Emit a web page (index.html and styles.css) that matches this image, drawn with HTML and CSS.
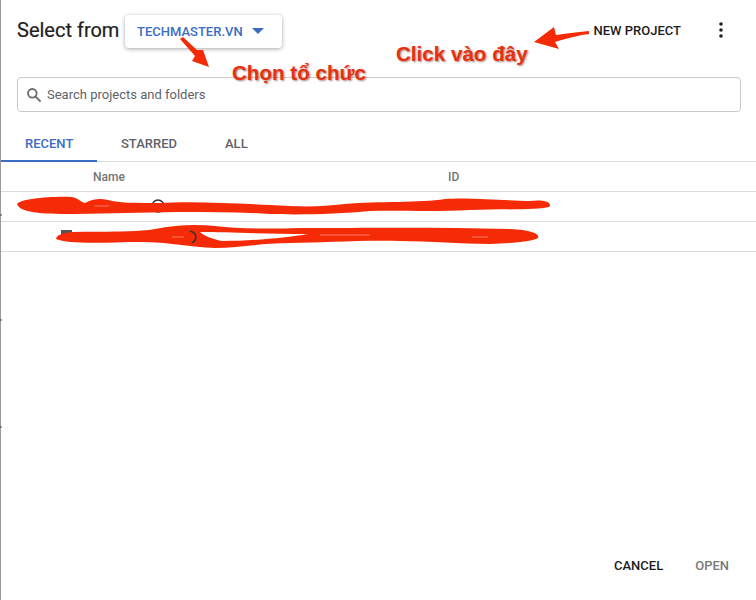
FILE: index.html
```html
<!DOCTYPE html>
<html lang="vi">

<head>
	<meta charset="UTF-8" />
	<title>Select from</title>
	<link rel="stylesheet" href="styles.css">
</head>

<body>
	<div class="dialog">
		<div class="top_bar">
			<span class="title">Select from</span>
			<button class="org_button">TECHMASTER.VN<span class="caret"></span></button>
			<button class="new_project">NEW PROJECT</button>
			<svg class="more_icon" width="4" height="16" viewBox="0 0 4 16">
				<circle cx="2" cy="2" r="1.8" />
				<circle cx="2" cy="8" r="1.8" />
				<circle cx="2" cy="14" r="1.8" />
			</svg>
		</div>

		<div class="search_box">
			<svg class="search_icon" width="16" height="16" viewBox="0 0 16 16">
				<circle cx="6.3" cy="6.3" r="4.3" />
				<path d="M9.6 9.6 L14.6 14.6" />
			</svg>
			<span>Search projects and folders</span>
		</div>

		<div class="tabs">
			<div class="tab active">RECENT</div>
			<div class="tab starred">STARRED</div>
			<div class="tab all">ALL</div>
		</div>

		<div class="row head_row">
			<span class="col_name">Name</span>
			<span class="col_id">ID</span>
		</div>
		<div class="row"></div>
		<div class="row"></div>

		<div class="actions">
			<button class="cancel">CANCEL</button>
			<button class="open">OPEN</button>
		</div>

		<!-- hand drawn notes on top of the screenshot -->
		<svg class="scribble" width="756" height="600" viewBox="0 0 756 600">
			<path class="edge_mark" d="M0 215 h2 M0 320 h2 M0 427 h2" />
			<circle class="ink" cx="158" cy="206" r="6" />
			<path class="ink_box" d="M61 230 h11 v8 h-11 z" />
			<path class="red" d="M17 204 C20 199 50 196 72 197 C80 199 82 203 85 203 C92 199 100 198 108 200 C118 203 135 203 160 203 C190 201 230 203 270 205 C300 207 320 207 345 204 C380 201 420 203 445 199 C470 197 510 201 530 201 C545 199 553 203 549 207 C540 210 500 209 470 210 C430 212 400 210 370 211 C340 214 300 215 270 214 C240 212 210 212 180 212 C140 213 110 213 75 214 C50 214 20 214 17 204 Z" />
			<path class="red" fill-rule="evenodd" d="M56 239 C57 235 62 233 72 232 C100 231 130 233 155 229 C175 225 195 224 215 226 C240 229 270 229 300 228 C360 228 440 227 510 229 C532 230 540 234 538 238 C532 242 510 243 490 244 C460 244 430 241 400 241 C360 240 320 243 290 243 C260 243 240 248 215 248 C190 247 170 242 140 242 C110 242 70 245 56 239 Z M200 232 C225 232 265 234 308 234 C285 238 250 241 222 241 C212 239 204 236 200 232 Z" />
			<path class="ink" d="M190 231 C197 233 198 239 192 243" />
			<path class="flecks" d="M95 206 h14 M172 237 h12 M320 235 h50 M472 237 h16" />
			<path class="red" d="M180 39 L183 37 L197 50 L203 50 L209 67 L192 61 L195 56 Z" />
			<path class="red" d="M589 31 C576 32 565 34 556 35 L554 27 L534 42 L559 49 L555 42 C568 38 580 35 589 34 Z" />
		</svg>
		<div class="note note_org">Chọn tổ chức</div>
		<div class="note note_new">Click vào đây</div>
	</div>
</body>

</html>
```

FILE: styles.css
```css
html,
body {
	margin: 0;
	padding: 0;
}

body {
	width: 756px;
	height: 600px;
	overflow: hidden;
	background: #ffffff;
	font-family: Roboto, "Liberation Sans", sans-serif;
}

button {
	border: none;
	background: none;
	padding: 0;
	font-family: inherit;
}

.dialog {
	position: relative;
	box-sizing: border-box;
	width: 756px;
	height: 600px;
	border-left: 1px solid #9a9a9a;
}

.top_bar {
	display: flex;
	align-items: center;
	height: 32px;
	padding: 14px 33px 0 16px;
}

.title {
	width: 103px;
	font-size: 20px;
	color: #212121;
	-webkit-text-stroke: 0.2px #212121;
}

.org_button {
	display: flex;
	align-items: center;
	box-sizing: border-box;
	width: 157px;
	height: 33px;
	margin: 2px 0 0 5px;
	padding-left: 12px;
	border-radius: 4px;
	background: #ffffff;
	box-shadow: 0 1px 4px rgba(0, 0, 0, 0.35);
	color: #3b6cc4;
	font-size: 13px;
	font-weight: 500;
}

.caret {
	width: 0;
	height: 0;
	margin-left: 9px;
	border-left: 6px solid transparent;
	border-right: 6px solid transparent;
	border-top: 6px solid #3b6cc4;
}

.new_project {
	margin: 0 2px 0 auto;
	color: #1c1c1c;
	font-size: 13px;
	font-weight: 500;
}

.more_icon {
	margin-left: 36px;
	fill: #222222;
}

.search_box {
	display: flex;
	align-items: center;
	box-sizing: border-box;
	width: 724px;
	height: 35px;
	margin: 31px 0 0 16px;
	padding-left: 8px;
	border: 1px solid #c9c9c9;
	border-radius: 4px;
	color: #5f6368;
	font-size: 13px;
}

.search_icon {
	margin-right: 5px;
	fill: none;
	stroke: #6b6b6b;
	stroke-width: 1.8;
}

.tabs {
	display: flex;
	height: 50px;
	box-sizing: border-box;
	border-bottom: 1px solid #dcdcdc;
}

.tab {
	box-sizing: border-box;
	height: 50px;
	padding-top: 24px;
	color: #5f6368;
	font-size: 13px;
	font-weight: 500;
}

.tab.active {
	width: 96px;
	padding-left: 24px;
	border-bottom: 2px solid #3b6cc4;
	color: #3b6cc4;
}

.tab.starred {
	width: 104px;
	padding-left: 24px;
}

.tab.all {
	padding-left: 24px;
}

.row {
	display: flex;
	align-items: center;
	box-sizing: border-box;
	height: 30px;
	border-bottom: 1px solid #dcdcdc;
}

.col_name,
.col_id {
	color: #757575;
	font-size: 12px;
	font-weight: 500;
}

.col_name {
	width: 355px;
	margin-left: 92px;
}

.actions {
	position: absolute;
	right: 27px;
	bottom: 27px;
	display: flex;
	gap: 32px;
}

.actions button {
	font-size: 13px;
	font-weight: 500;
}

.cancel {
	color: #1c1c1c;
}

.open {
	color: #7a7a7a;
}

.scribble {
	position: absolute;
	left: -1px;
	top: 0;
}

.edge_mark {
	fill: none;
	stroke: #444444;
	stroke-width: 1;
}

.ink {
	fill: none;
	stroke: #333333;
	stroke-width: 1.5;
}

.ink_box {
	fill: #555555;
}

.red {
	fill: #f52b07;
}

.flecks {
	fill: none;
	stroke: #f97a60;
	stroke-width: 1;
}

.note {
	position: absolute;
	color: #e8300e;
	font-family: "Liberation Sans", Arial, sans-serif;
	font-size: 20.6px;
	font-weight: bold;
	line-height: 24px;
	text-shadow: 1px 1px 2px rgba(90, 30, 20, 0.55), 0 0 2px #ffffff;
}

.note_org {
	left: 231px;
	top: 61px;
}

.note_new {
	left: 395px;
	top: 42px;
}
```
